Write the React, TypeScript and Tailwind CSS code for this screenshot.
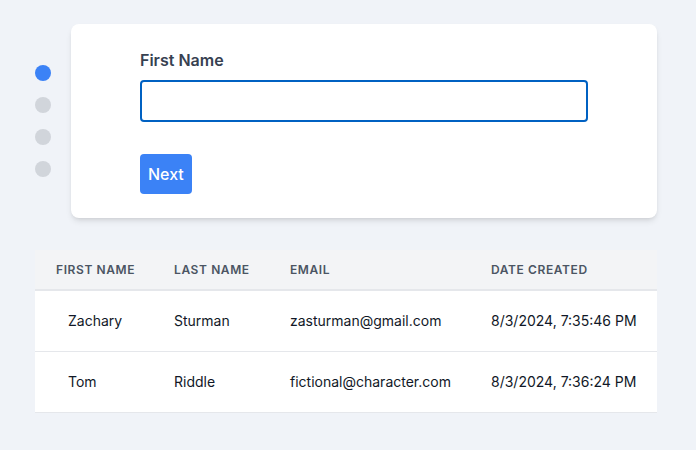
import React from "react";

const rows = [
  { first: "Zachary", last: "Sturman", email: "zasturman@gmail.com", date: "8/3/2024, 7:35:46 PM" },
  { first: "Tom", last: "Riddle", email: "fictional@character.com", date: "8/3/2024, 7:36:24 PM" },
];

export default function App() {
  return (
    <div className="min-h-[450px] w-full bg-[#f0f3f8] pt-6" style={{ fontFamily: "Inter, 'Liberation Sans', sans-serif" }}>
      <div className="ml-[35px] w-[622px]">
        <div className="flex gap-5">
          <div className="mt-[41px] flex flex-col gap-4">
            <div className="h-4 w-4 rounded-full bg-[#3b82f6]" />
            <div className="h-4 w-4 rounded-full bg-[#d1d5db]" />
            <div className="h-4 w-4 rounded-full bg-[#d1d5db]" />
            <div className="h-4 w-4 rounded-full bg-[#d1d5db]" />
          </div>
          <div className="flex-1 rounded-lg bg-white px-[69px] pt-6 pb-6 shadow-md">
            <label className="block text-base font-semibold leading-6 text-[#374151]">First Name</label>
            <input className="mt-2 block h-[42px] w-full rounded border-2 border-[#0061c2] outline-none" />
            <button className="mt-8 h-10 rounded bg-[#3b82f6] px-2 text-base font-medium text-white">Next</button>
          </div>
        </div>
        <table className="mt-8 w-full table-fixed border-collapse">
          <colgroup>
            <col className="w-[118px]" />
            <col className="w-[116px]" />
            <col className="w-[201px]" />
            <col />
          </colgroup>
          <thead>
            <tr className="h-10 border-b-2 border-[#e5e7eb] bg-[#f3f4f6]">
              <th className="pl-[21px] text-left text-xs font-semibold uppercase tracking-wider text-[#4b5563]">First Name</th>
              <th className="pl-[21px] text-left text-xs font-semibold uppercase tracking-wider text-[#4b5563]">Last Name</th>
              <th className="pl-[21px] text-left text-xs font-semibold uppercase tracking-wider text-[#4b5563]">Email</th>
              <th className="pl-[21px] text-left text-xs font-semibold uppercase tracking-wider text-[#4b5563]">Date Created</th>
            </tr>
          </thead>
          <tbody className="bg-white">
            {rows.map((r) => (
              <tr key={r.email} className="h-[61px] border-b border-[#e5e7eb]">
                <td className="pl-[33px] text-sm text-[#111827]">{r.first}</td>
                <td className="pl-[21px] text-sm text-[#111827]">{r.last}</td>
                <td className="pl-[21px] text-sm text-[#111827]">{r.email}</td>
                <td className="pl-[21px] text-sm text-[#111827]">{r.date}</td>
              </tr>
            ))}
          </tbody>
        </table>
      </div>
    </div>
  );
}
